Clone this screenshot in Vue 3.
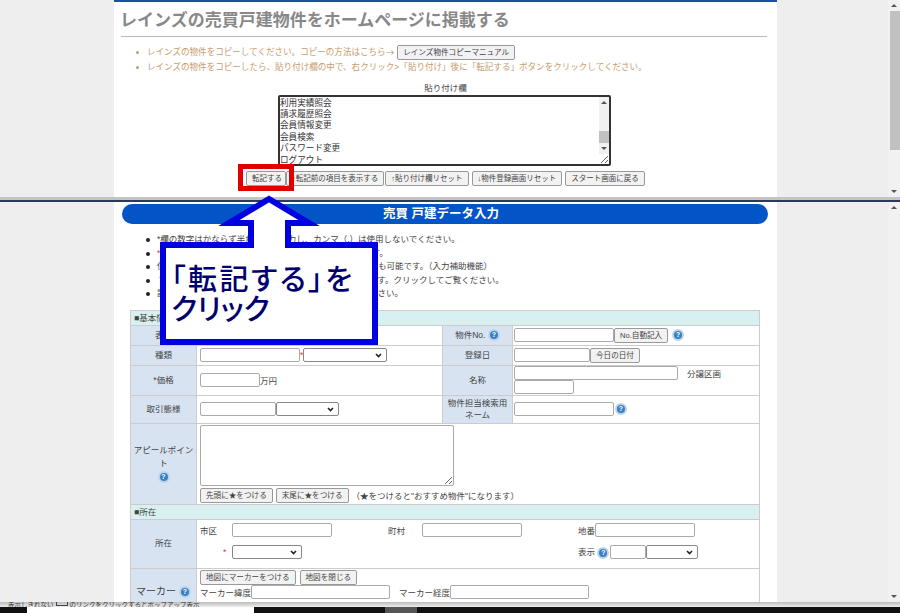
<template>
  <div class="screen">
    <section class="pane pane-top">
      <div class="gutter">
        <div class="sheet sheet-top">
          <h1 class="title">レインズの売買戸建物件をホームページに掲載する</h1>
          <ul class="notes">
            <li>
              レインズの物件をコピーしてください。コピーの方法はこちら<span class="cjk-arrow">→</span>
              <button class="btn btn-manual">レインズ物件コピーマニュアル</button>
            </li>
            <li>レインズの物件をコピーしたら、貼り付け欄の中で、右クリック&gt;「貼り付け」後に「転記する」ボタンをクリックしてください。</li>
          </ul>
          <div class="paste-label">貼り付け欄</div>
          <div class="paste-wrap">
            <textarea ref="pasteBox" class="paste-box" :value="pasteText" readonly></textarea>
            <div class="mini-bar">
              <span class="arrow up"></span>
              <span class="mini-thumb"></span>
              <span class="arrow down"></span>
            </div>
          </div>
          <div class="actions">
            <button class="btn btn-post">転記する</button>
            <button v-for="label in actionLabels" :key="label" class="btn">{{ label }}</button>
          </div>
        </div>
      </div>
      <div class="scrollbar">
        <span class="arrow up"></span>
        <span class="thumb"></span>
        <span class="arrow down"></span>
      </div>
    </section>

    <section class="pane pane-bottom">
      <div class="gutter">
        <div class="sheet sheet-bottom">
          <h2 class="form-head">売買 戸建データ入力</h2>
          <ul class="rules">
            <li>*欄の数字はかならず半角英数で入力し、カンマ（,）は使用しないでください。</li>
            <li><span class="req">*</span>印は入力必須項目です。物件公開には必ず入力が必要です。</li>
            <li>住所は地図のマーカーの表示位置から自動で入力することも可能です。（入力補助機能）</li>
            <li>？アイコンにマウスを合わせると、その説明が表示されます。クリックしてご覧ください。</li>
            <li>詳細は各項目のヘルプをよくご確認のうえ、入力してください。</li>
          </ul>

          <table class="form-table">
            <colgroup>
              <col class="c-label" />
              <col class="c-value" />
              <col class="c-label2" />
              <col />
            </colgroup>
            <tbody>
              <tr class="section"><td colspan="4">■基本情報</td></tr>
              <tr class="r-20">
                <th>表示</th>
                <td></td>
                <th>物件No. <span class="help">?</span></th>
                <td>
                  <div class="line">
                    <input class="w-100" />
                    <button class="btn">No.自動記入</button>
                    <span class="help help-gap">?</span>
                  </div>
                </td>
              </tr>
              <tr class="r-20">
                <th>種類</th>
                <td>
                  <div class="line">
                    <input class="w-100" />
                    <span class="req">*</span>
                    <select class="w-84"></select>
                  </div>
                </td>
                <th>登録日</th>
                <td>
                  <div class="line">
                    <input class="w-76" />
                    <button class="btn">今日の日付</button>
                  </div>
                </td>
              </tr>
              <tr class="r-30">
                <th>*価格</th>
                <td>
                  <div class="line"><input class="w-60" />万円</div>
                </td>
                <th>名称</th>
                <td>
                  <div class="line">
                    <input class="w-164" />
                    <span class="block-label">分譲区画</span>
                  </div>
                  <input class="w-60 block-input" />
                </td>
              </tr>
              <tr class="r-28">
                <th class="tight">取引態様</th>
                <td>
                  <div class="line">
                    <input class="w-76" />
                    <select class="w-63"></select>
                  </div>
                </td>
                <th class="tight">物件担当検索用ネーム</th>
                <td>
                  <div class="line">
                    <input class="w-100" />
                    <span class="help help-gap-sm">?</span>
                  </div>
                </td>
              </tr>
              <tr>
                <th>アピールポイント<br /><span class="help help-row">?</span></th>
                <td colspan="3">
                  <textarea class="appeal"></textarea>
                  <div class="line star-row">
                    <button class="btn">先頭に★をつける</button>
                    <button class="btn">末尾に★をつける</button>
                    <span>（★をつけると"おすすめ物件"になります）</span>
                  </div>
                </td>
              </tr>
              <tr class="section"><td colspan="4">■所在</td></tr>
              <tr>
                <th>所在</th>
                <td colspan="3">
                  <div class="place place-first">
                    <span class="place-city">市区</span>
                    <input class="w-100" />
                    <span class="place-town">町村</span>
                    <input class="w-100" />
                    <span class="place-lot">地番</span>
                    <input class="w-100" />
                  </div>
                  <div class="place place-second">
                    <span class="place-star req">*</span>
                    <select class="w-70"></select>
                    <span class="place-show">表示 <span class="help">?</span></span>
                    <input class="w-36" />
                    <select class="w-52"></select>
                  </div>
                </td>
              </tr>
              <tr class="marker-row">
                <th class="marker-head">マーカー <span class="help">?</span></th>
                <td colspan="3">
                  <div class="line marker-buttons">
                    <button class="btn">地図にマーカーをつける</button>
                    <button class="btn">地図を閉じる</button>
                  </div>
                  <div class="line">
                    マーカー緯度<input class="w-139" />
                    <span class="marker-second">マーカー経度</span><input class="w-139" />
                  </div>
                </td>
              </tr>
            </tbody>
          </table>
        </div>
      </div>
      <div class="scrollbar">
        <span class="arrow up"></span>
        <span class="track-rest"></span>
        <span class="arrow down"></span>
      </div>

      <div class="callout">
        <svg class="callout-shape" width="226" height="156" viewBox="157 190 226 156">
          <polygon
            points="269,197 309,221 288,221 288,243 375,243 375,340 163,340 163,243 251,243 251,221 229,221"
            fill="#fff"
            stroke="#0000e0"
            stroke-width="6"
          />
        </svg>
        <div class="callout-text"><span class="callout-first">「転記する」を</span><br />クリック</div>
      </div>
    </section>

    <div class="red-box"></div>

    <footer class="status">
      <div class="status-text">
        <span>表示しきれない</span><i class="status-box"></i><span>のリンクをクリックするとポップアップ表示</span>
      </div>
      <div class="taskbar">
        <span class="task-dark"></span>
        <span class="task-active"></span>
        <span class="task-fill"></span>
      </div>
    </footer>
  </div>
</template>

<script setup>
import { onMounted, ref } from "vue";

const actionLabels = [
  "↑転記前の項目を表示する",
  "↑貼り付け欄リセット",
  "↓物件登録画面リセット",
  "スタート画面に戻る",
];

const menuLines = ["利用実績照会", "請求履歴照会", "会員情報変更", "会員検索", "パスワード変更", "ログアウト"];
const pasteText = [...Array(7).fill(menuLines).flat()].join("\n");

const pasteBox = ref(null);

onMounted(() => {
  const box = pasteBox.value;
  box.scrollTop = box.scrollHeight - box.clientHeight - 2;
});
</script>

<style>
html,
body {
  margin: 0;
  background: #eee;
}
</style>

<style scoped>
.screen {
  position: relative;
  width: 900px;
  height: 613px;
  overflow: hidden;
  display: flex;
  flex-direction: column;
  font-family: "Liberation Sans", "Noto Sans CJK JP", sans-serif;
  font-size: 8.5px;
  color: #444;
  background: #eee;
}

.pane {
  position: relative;
  display: flex;
  overflow: hidden;
}

.pane-top {
  height: 197px;
  flex: none;
  border-bottom: 3px solid #c4c4c4;
}

.pane-bottom {
  height: 402px;
  flex: none;
  overflow: visible;
  border-top: 2px solid #2b3a55;
  box-sizing: border-box;
}

.gutter {
  flex: 1;
  padding: 0 111px 0 114px;
  overflow: hidden;
  min-width: 0;
}

.sheet {
  background: #fff;
  height: 100%;
}

.sheet-top {
  box-sizing: border-box;
  padding: 2px 10px 0 7px;
  box-shadow: inset 0 2px 0 #1c4f9c;
  display: flex;
  flex-direction: column;
}

.title {
  margin: 0;
  height: 34px;
  line-height: 38px;
  font-size: 17px;
  font-weight: 700;
  color: #888;
  border-bottom: 1px solid #bbb;
  white-space: nowrap;
  text-indent: -1px;
  flex: none;
}

.notes {
  margin: 8px 0 0;
  padding: 0 0 0 26px;
  font-size: 8.55px;
  color: #c79c6c;
  line-height: 15px;
  list-style: none;
  flex: none;
}

.notes li {
  position: relative;
  height: 15px;
  white-space: nowrap;
  display: flex;
  align-items: center;
}

.notes li::before {
  content: "";
  position: absolute;
  left: -11px;
  top: 6px;
  width: 3px;
  height: 3px;
  border-radius: 50%;
  background: #c79c6c;
}

.cjk-arrow {
  font-family: "Noto Sans CJK JP", sans-serif;
}

.btn {
  box-sizing: border-box;
  height: 15px;
  padding: 0 5px;
  font: inherit;
  font-size: 7.6px;
  line-height: 13px;
  color: #444;
  background: #f2f2f2;
  border: 1px solid #999;
  border-radius: 2px;
  white-space: nowrap;
  flex: none;
}

.btn-manual {
  margin-left: 3px;
}

.paste-label {
  margin-top: 6px;
  height: 14px;
  line-height: 14px;
  padding-left: 3px;
  text-align: center;
  flex: none;
}

.paste-wrap {
  position: relative;
  width: 333px;
  height: 71px;
  margin-left: 157px;
  flex: none;
}

.paste-box {
  box-sizing: border-box;
  width: 333px;
  height: 71px;
  padding: 0;
  font: inherit;
  font-size: 8.6px;
  line-height: 11.4px;
  color: #333;
  border: 2px solid #333;
  border-radius: 2px;
  outline: none;
  display: block;
}

.mini-bar {
  position: absolute;
  top: 2px;
  right: 2px;
  bottom: 12px;
  width: 10px;
  background: #f1f1f1;
  display: flex;
  flex-direction: column;
  align-items: center;
}

.mini-thumb {
  width: 100%;
  height: 12px;
  margin-top: auto;
  background: #c1c1c1;
}

.actions {
  margin: 5px 0 0 125px;
  display: flex;
  flex: none;
}

.btn-post {
  width: 40px;
}

.actions .btn {
  font-size: 7.5px;
}

.actions .btn:nth-child(3) {
  margin-left: 1px;
}

.actions .btn:nth-child(4) {
  margin-left: 3px;
}

.actions .btn:nth-child(5) {
  margin-left: 3px;
}

.red-box {
  position: absolute;
  left: 238px;
  top: 164px;
  width: 56px;
  height: 27px;
  box-sizing: border-box;
  border: 5px solid #e00000;
}

.scrollbar {
  width: 12px;
  flex: none;
  background: #f1f1f1;
  display: flex;
  flex-direction: column;
  align-items: center;
}

.arrow {
  flex: none;
  width: 0;
  height: 0;
  border-left: 3px solid transparent;
  border-right: 3px solid transparent;
  margin: 4px 0;
}

.arrow.up {
  border-bottom: 3px solid #555;
}

.arrow.down {
  border-top: 3px solid #555;
}

.thumb {
  width: 10px;
  height: 139px;
  align-self: flex-end;
  margin-bottom: auto;
  background: #c1c1c1;
}

.track-rest {
  flex: 1;
}

.sheet-bottom {
  padding: 2px 9px 0 8px;
  box-sizing: border-box;
  overflow: hidden;
}

.form-head {
  margin: 0;
  height: 20px;
  padding-right: 8px;
  line-height: 20px;
  font-size: 12.5px;
  font-weight: 700;
  color: #fff;
  text-align: center;
  background: #0355c7;
  border-radius: 10px;
}

.rules {
  margin: 9px 0 0;
  padding: 0 0 0 35px;
  line-height: 13.5px;
  color: #444;
  list-style: none;
}

.rules li {
  position: relative;
  white-space: nowrap;
}

.rules li::before {
  content: "";
  position: absolute;
  left: -11px;
  top: 5px;
  width: 4px;
  height: 4px;
  border-radius: 50%;
  background: #222;
}

.req {
  color: #d33;
}

.form-table {
  width: 630px;
  margin: 9px 0 0 8px;
  border-collapse: collapse;
  table-layout: fixed;
}

.c-label {
  width: 66px;
}

.c-value {
  width: 246px;
}

.c-label2 {
  width: 70px;
}

.form-table th,
.form-table td {
  border: 1px solid #ccc;
  padding: 1px 2px 1px 3px;
  vertical-align: middle;
  font-weight: 400;
}

.form-table tr > td:nth-child(4) {
  padding-left: 1px;
}

.form-table th {
  background: #d7e3f1;
  text-align: center;
  line-height: 13px;
  padding: 1px 2px;
}

.form-table th.tight {
  line-height: 12.5px;
  padding: 0 2px;
}

.form-table .section td {
  height: 14px;
  padding: 0 3px;
  line-height: 14px;
  background: #d8f1f0;
}

.r-20 {
  height: 20px;
}

.r-30 {
  height: 30px;
}

.form-table .r-30 td {
  padding-top: 0;
  padding-bottom: 0;
}

.r-28 {
  height: 28px;
}

.line {
  display: flex;
  align-items: center;
  white-space: nowrap;
}

input,
select {
  box-sizing: border-box;
  height: 14px;
  padding: 0 2px;
  font: inherit;
  background: #fff;
  border: 1px solid #aaa;
  border-radius: 2px;
  flex: none;
}

select {
  appearance: none;
  border-color: #888;
  background: #fff url("data:image/svg+xml,%3Csvg xmlns='http://www.w3.org/2000/svg' width='7' height='5'%3E%3Cpath d='M1 1l2.5 2.5L6 1' fill='none' stroke='%23222' stroke-width='1.6'/%3E%3C/svg%3E") no-repeat right 4px center;
}

.w-36 {
  width: 36px;
}

.w-52 {
  width: 52px;
}

.w-60 {
  width: 60px;
}

.w-63 {
  width: 63px;
}

.w-70 {
  width: 70px;
}

.w-76 {
  width: 76px;
}

.w-84 {
  width: 84px;
}

.w-100 {
  width: 100px;
}

.w-139 {
  width: 139px;
}

.w-164 {
  width: 164px;
}

.help {
  display: inline-block;
  box-sizing: border-box;
  width: 12px;
  height: 12px;
  border-radius: 50%;
  border: 2px solid #bcd3ea;
  background: #3a80c4;
  color: #fff;
  font-size: 7px;
  font-weight: 700;
  line-height: 8px;
  text-align: center;
  vertical-align: middle;
  flex: none;
}

.help-gap {
  margin-left: 4px;
}

.help-gap-sm {
  margin-left: 1px;
}

.help-row {
  margin-top: 1px;
}

.block-label {
  margin-left: 9px;
}

.block-input {
  display: block;
}

.appeal {
  display: block;
  box-sizing: border-box;
  width: 254px;
  height: 61px;
  border: 1px solid #aaa;
  border-radius: 2px;
  outline: none;
  font: inherit;
}

.star-row {
  gap: 3px;
  margin-top: 2px;
}

.place {
  display: flex;
  align-items: center;
  height: 15px;
  white-space: nowrap;
}

.place-first {
  margin-top: 2px;
}

.place-second {
  margin-top: 7px;
  margin-bottom: 7px;
}

.place-city {
  width: 32px;
  flex: none;
}

.place-town {
  width: 34px;
  margin-left: 56px;
  flex: none;
}

.place-lot {
  width: 17px;
  margin-left: 56px;
  flex: none;
}

.place-star {
  width: 8px;
  margin-left: 23px;
  margin-right: 1px;
  flex: none;
}

.place-show {
  width: 32px;
  margin-left: 276px;
  flex: none;
}

.marker-buttons {
  gap: 4px;
}

.marker-row td {
  padding-bottom: 16px;
}

.marker-head {
  font-size: 10px;
}

.marker-second {
  margin-left: 9px;
}

.callout {
  position: absolute;
  left: 157px;
  top: -10px;
  width: 226px;
  height: 156px;
}

.callout-shape {
  display: block;
  overflow: visible;
}

.callout-text {
  position: absolute;
  left: 14px;
  top: 70px;
  font-family: "Noto Sans CJK JP", sans-serif;
  font-size: 29px;
  font-weight: 500;
  font-feature-settings: "palt";
  line-height: 30px;
  color: #00006e;
  white-space: nowrap;
}

.callout-first {
  letter-spacing: 2.5px;
}

.status {
  flex: 1;
  display: flex;
  flex-direction: column;
  min-height: 0;
}

.status-text {
  height: 5px;
  overflow: hidden;
  flex: none;
  display: flex;
  align-items: flex-start;
  padding-left: 8px;
  font-size: 6.5px;
  line-height: 5px;
  color: #333;
  white-space: nowrap;
  background: linear-gradient(#bbb, #eee);
}

.status-box {
  width: 12px;
  height: 9px;
  margin: -5px 2px 0;
  box-sizing: border-box;
  border: 1px solid #444;
  flex: none;
}

.taskbar {
  flex: 1;
  display: flex;
  background: #111;
}

.task-dark {
  width: 27px;
}

.task-active {
  width: 227px;
  background: #fff;
}

.task-fill {
  flex: 1;
  background: linear-gradient(90deg, #111 0 131px, #555 131px 163px, #111 163px);
}
</style>
